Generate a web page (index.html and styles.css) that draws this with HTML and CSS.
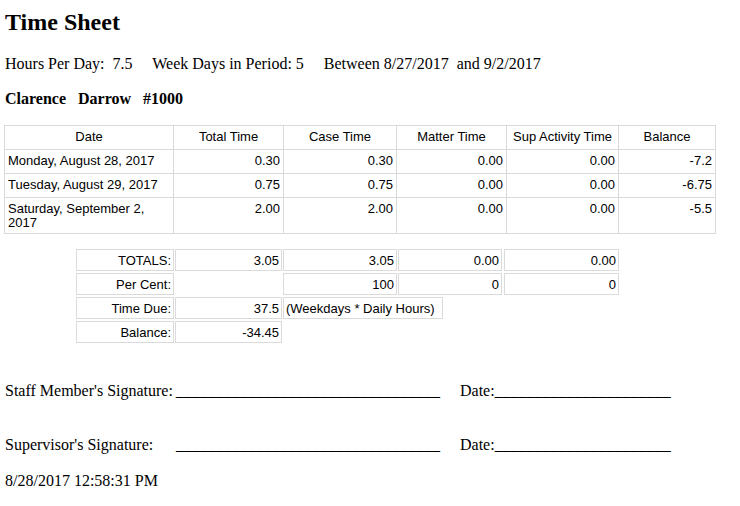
FILE: index.html
```html
<!DOCTYPE html>
<html>
<head>
<meta charset="utf-8">
<link rel="stylesheet" href="styles.css">
</head>
<body>
<h1 class="title">Time Sheet</h1>
<p class="period">Hours Per Day:&nbsp; 7.5 &nbsp;&nbsp;&nbsp; Week Days in Period: 5 &nbsp;&nbsp;&nbsp; Between 8/27/2017&nbsp; and 9/2/2017</p>
<p class="person">Clarence &nbsp; Darrow &nbsp; #1000</p>

<table class="sheet">
  <colgroup>
    <col class="c-date"><col class="c-total"><col class="c-case"><col class="c-matter"><col class="c-sup"><col class="c-bal">
  </colgroup>
  <thead>
    <tr><th>Date</th><th>Total Time</th><th>Case Time</th><th>Matter Time</th><th>Sup Activity Time</th><th>Balance</th></tr>
  </thead>
  <tbody>
    <tr><td class="l">Monday, August 28, 2017</td><td>0.30</td><td>0.30</td><td>0.00</td><td>0.00</td><td>-7.2</td></tr>
    <tr><td class="l">Tuesday, August 29, 2017</td><td>0.75</td><td>0.75</td><td>0.00</td><td>0.00</td><td>-6.75</td></tr>
    <tr><td class="l">Saturday, September 2, 2017</td><td>2.00</td><td>2.00</td><td>0.00</td><td>0.00</td><td>-5.5</td></tr>
  </tbody>
</table>

<div class="totals">
  <div class="trow">
    <div class="cell w-label">TOTALS:</div>
    <div class="cell w-val">3.05</div>
    <div class="cell w-case">3.05</div>
    <div class="cell w-matter">0.00</div>
    <div class="cell w-sup">0.00</div>
  </div>
  <div class="trow">
    <div class="cell w-label">Per Cent:</div>
    <div class="cell w-val empty"></div>
    <div class="cell w-case">100</div>
    <div class="cell w-matter">0</div>
    <div class="cell w-sup">0</div>
  </div>
  <div class="trow">
    <div class="cell w-label">Time Due:</div>
    <div class="cell w-val">37.5</div>
    <div class="cell note">(Weekdays * Daily Hours)</div>
  </div>
  <div class="trow">
    <div class="cell w-label">Balance:</div>
    <div class="cell w-val">-34.45</div>
  </div>
</div>

<div class="signs">
  <div class="sig-label">Staff Member's Signature:</div>
  <div class="sig-line">_________________________________</div>
  <div class="sig-date">Date:______________________</div>
  <div class="sig-label">Supervisor's Signature:</div>
  <div class="sig-line">_________________________________</div>
  <div class="sig-date">Date:______________________</div>
</div>

<p class="stamp">8/28/2017 12:58:31 PM</p>
</body>
</html>
```

FILE: styles.css
```css
html, body {
  background: #ffffff;
}
body {
  margin: 0;
  padding: 4px 4px;
  font-family: "Liberation Serif", "Times New Roman", serif;
  font-size: 16px;
  color: #000;
}
.title {
  font-size: 24px;
  font-weight: bold;
  margin: 5px 0 0 1px;
  line-height: 26px;
}
.period {
  margin: 20px 0 0 1px;
  line-height: 18px;
}
.person {
  margin: 17px 0 0 1px;
  font-weight: bold;
  line-height: 18px;
}
.sheet {
  margin-top: 17px;
  border-collapse: collapse;
  table-layout: fixed;
  width: 711px;
  font-family: "Liberation Sans", Arial, sans-serif;
  font-size: 13px;
}
.c-date { width: 169px; }
.c-total { width: 110px; }
.c-case { width: 113px; }
.c-matter { width: 110px; }
.c-sup { width: 112px; }
.c-bal { width: 97px; }
.sheet tr {
  height: 24px;
}
.sheet th, .sheet td {
  border: 1px solid #dadada;
  padding: 4px 3px 3px 3px;
  line-height: 14px;
  vertical-align: top;
}
.sheet th {
  font-weight: normal;
  text-align: center;
}
.sheet td {
  text-align: right;
}
.sheet td.l {
  text-align: left;
}
.totals {
  margin: 15px 0 0 72px;
  display: flex;
  flex-direction: column;
  gap: 2px;
  font-family: "Liberation Sans", Arial, sans-serif;
  font-size: 13px;
}
.trow {
  display: flex;
  gap: 1px;
}
.cell {
  box-sizing: border-box;
  height: 22px;
  border: 1px solid #dadada;
  padding: 3px 2px 0 2px;
  line-height: 15px;
  text-align: right;
}
.cell.empty { border-color: transparent; }
.w-label { width: 98px; }
.w-val { width: 107px; }
.w-case { width: 114px; }
.w-matter { width: 104px; }
.w-sup { width: 115px; margin-left: 1px; }
.note {
  text-align: left;
  width: 160px;
}
.signs {
  margin-top: 39px;
  display: grid;
  grid-template-columns: 171px 284px auto;
  row-gap: 36px;
  line-height: 18px;
  margin-left: 1px;
}
.stamp {
  margin: 18px 0 0 1px;
  line-height: 18px;
}
```
